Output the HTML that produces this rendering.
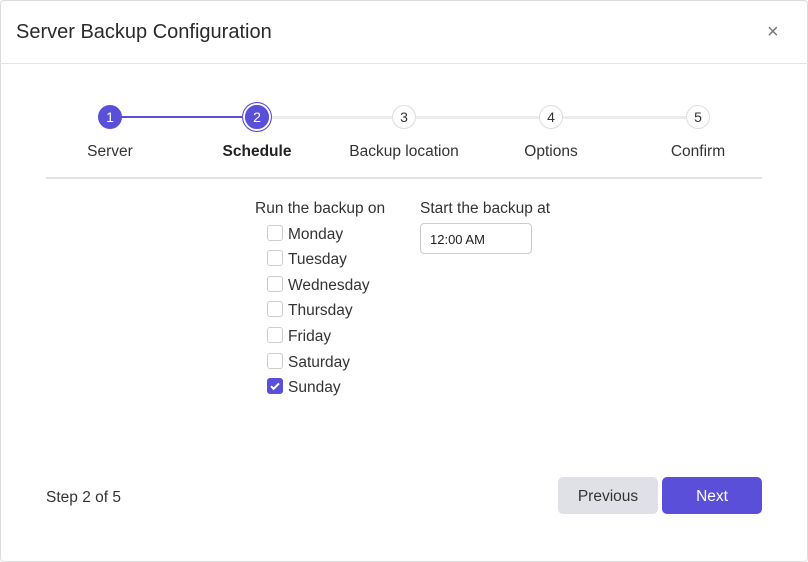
<!DOCTYPE html>
<html><head><style>
*{box-sizing:border-box;margin:0;padding:0}
body{width:808px;height:562px;background:#fff;font-family:"Liberation Sans",sans-serif;color:#222;position:relative;overflow:hidden}
.dlg{position:absolute;left:0;top:0;width:808px;height:562px;border:1px solid #dcdcdc;border-radius:4px}
.hdr{position:absolute;left:0;top:0;width:808px;height:64px;border-bottom:1px solid #e6e6e6}
.title{position:absolute;left:16px;top:21px;font-size:20px;color:#2a2a2a}
.x{position:absolute;left:767px;top:21px;font-size:20px;color:#777}
.line{position:absolute;top:116px;height:3px}
.c{position:absolute;top:105px;width:24px;height:24px;border-radius:50%;text-align:center;line-height:24px;font-size:14px}
.done{background:#5a4fd8;color:#fff}
.todo{background:#fff;border:1px solid #ddd;color:#333;line-height:22px}
.lbl{position:absolute;top:143px;font-size:15.5px;width:140px;text-align:center;color:#333}
.hr{position:absolute;left:46px;top:177px;width:716px;height:2px;background:#e3e3e3}
.t{position:absolute;font-size:15.5px;color:#333}
.cb{position:absolute;left:267px;width:16px;height:16px;border:1px solid #ccc;border-radius:3px;background:#fff}
.inp{position:absolute;left:420px;top:223px;width:112px;height:31px;border:1px solid #ccc;border-radius:4px;font-size:13px;padding:8px 0 0 9px;color:#222}
.btn{position:absolute;top:477px;width:100px;height:37px;border-radius:5px;text-align:center;line-height:39px;font-size:15.5px}
</style></head><body>
<div class="dlg"></div>
<div class="hdr"></div>
<div class="title">Server Backup Configuration</div>
<div class="x">×</div>
<div class="line" style="left:110px;width:147px;background:#5a4fd8;height:2px;top:116px"></div>
<div class="line" style="left:257px;width:441px;background:#ececef"></div>
<div class="c done" style="left:98px">1</div>
<div class="c done" style="left:242px;top:102px;width:30px;height:30px;line-height:30px;box-shadow:0 0 0 2px #fff inset;border:1px solid #5a4fd8;background:#5a4fd8;outline:none"><span style="display:block;width:24px;height:24px;margin:2px;border-radius:50%;line-height:24px;background:#5a4fd8">2</span></div>
<div class="c todo" style="left:392px">3</div>
<div class="c todo" style="left:539px">4</div>
<div class="c todo" style="left:686px">5</div>
<div class="lbl" style="left:40px">Server</div>
<div class="lbl" style="left:187px;font-weight:bold;color:#222">Schedule</div>
<div class="lbl" style="left:334px">Backup location</div>
<div class="lbl" style="left:481px">Options</div>
<div class="lbl" style="left:628px">Confirm</div>
<div class="hr"></div>
<div class="t" style="left:255px;top:200px">Run the backup on</div>
<div class="t" style="left:420px;top:200px">Start the backup at</div>
<div class="inp">12:00 AM</div>
<div class="cb" style="top:225px"></div><div class="t" style="left:288px;top:226px">Monday</div>
<div class="cb" style="top:250px"></div><div class="t" style="left:288px;top:251px">Tuesday</div>
<div class="cb" style="top:276px"></div><div class="t" style="left:288px;top:277px">Wednesday</div>
<div class="cb" style="top:301px"></div><div class="t" style="left:288px;top:302px">Thursday</div>
<div class="cb" style="top:327px"></div><div class="t" style="left:288px;top:328px">Friday</div>
<div class="cb" style="top:353px"></div><div class="t" style="left:288px;top:354px">Saturday</div>
<div class="cb" style="top:378px;background:#5a4fd8;border-color:#5a4fd8"><svg width="14" height="14" viewBox="0 0 14 14"><path d="M3 7.2l2.6 2.6L11 4.4" stroke="#fff" stroke-width="2" fill="none"/></svg></div><div class="t" style="left:288px;top:379px">Sunday</div>
<div class="t" style="left:46px;top:489px">Step 2 of 5</div>
<div class="btn" style="left:558px;background:#dfe1e6;color:#333">Previous</div>
<div class="btn" style="left:662px;background:#5a4fd8;color:#fff">Next</div>
</body></html>
